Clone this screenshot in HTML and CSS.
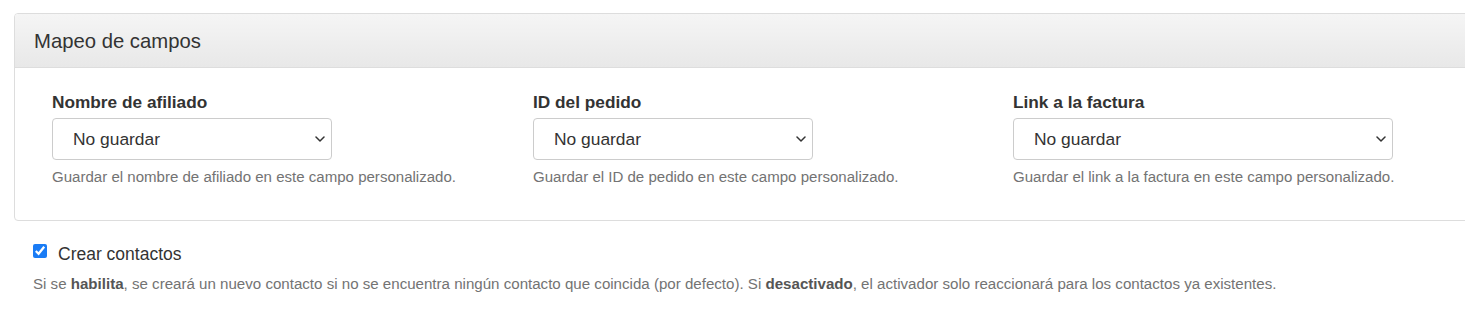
FILE: index.html
```html
<!DOCTYPE html>
<html lang="es">
<head>
<meta charset="utf-8">
<title>Mapeo de campos</title>
<link rel="stylesheet" href="styles.css">
</head>
<body>
<div class="page">
  <section class="panel">
    <div class="panel-heading">Mapeo de campos</div>
    <div class="panel-body">
      <div class="field">
        <label class="field-label">Nombre de afiliado</label>
        <select class="select"><option>No guardar</option></select>
        <p class="help">Guardar el nombre de afiliado en este campo personalizado.</p>
      </div>
      <div class="field">
        <label class="field-label">ID del pedido</label>
        <select class="select"><option>No guardar</option></select>
        <p class="help">Guardar el ID de pedido en este campo personalizado.</p>
      </div>
      <div class="field">
        <label class="field-label">Link a la factura</label>
        <select class="select select-wide"><option>No guardar</option></select>
        <p class="help">Guardar el link a la factura en este campo personalizado.</p>
      </div>
    </div>
  </section>
  <div class="check-row">
    <input type="checkbox" class="check" checked>
    <span class="check-label">Crear contactos</span>
  </div>
  <p class="desc">Si se <b>habilita</b>, se creará un nuevo contacto si no se encuentra ningún contacto que coincida (por defecto). Si <b>desactivado</b>, el activador solo reaccionará para los contactos ya existentes.</p>
</div>
</body>
</html>
```
FILE: styles.css
```css
html, body {
  margin: 0;
  padding: 0;
  background: #ffffff;
  overflow: hidden;
}
body {
  font-family: "Liberation Sans", Arial, Helvetica, sans-serif;
  color: #333333;
}
.page {
  padding-top: 13px;
}
.panel {
  margin-left: 14px;
  margin-right: -20px;
  border: 1px solid #dddddd;
  border-radius: 4px;
  background: #ffffff;
}
.panel-heading {
  height: 54px;
  box-sizing: border-box;
  display: flex;
  align-items: center;
  padding: 2px 19px 0;
  font-size: 20.3px;
  color: #333333;
  background: linear-gradient(to bottom, #f5f5f5 0%, #e8e8e8 100%);
  border-bottom: 1px solid #dddddd;
  border-radius: 3px 3px 0 0;
}
.panel-body {
  display: grid;
  grid-template-columns: 481px 480px 1fr;
  padding: 24px 0 35px 37px;
}
.field {
  display: flex;
  flex-direction: column;
  align-items: flex-start;
}
.field-label {
  font-weight: bold;
  font-size: 17.25px;
  line-height: 20px;
  color: #333333;
  margin-bottom: 6px;
}
.select {
  appearance: none;
  -webkit-appearance: none;
  width: 280px;
  height: 42px;
  box-sizing: border-box;
  border: 1px solid #cccccc;
  border-radius: 4px;
  background-color: #ffffff;
  background-image: url("data:image/svg+xml;utf8,<svg xmlns='http://www.w3.org/2000/svg' width='10' height='6' viewBox='0 0 10 6'><path d='M1 1 L5 5 L9 1' fill='none' stroke='%23333' stroke-width='1.5' stroke-linecap='round' stroke-linejoin='round'/></svg>");
  background-repeat: no-repeat;
  background-position: right 6px center;
  background-size: 10px 6px;
  padding: 0 24px 0 20px;
  font-family: "Liberation Sans", Arial, Helvetica, sans-serif;
  font-size: 17.4px;
  color: #333333;
}
.select-wide {
  width: 380px;
}
.help {
  margin: 8px 0 0;
  font-size: 15.05px;
  line-height: 17px;
  color: #737373;
}
.check-row {
  display: flex;
  align-items: flex-start;
  margin: 23px 0 0 33px;
}
.check {
  width: 14px;
  height: 14px;
  margin: 0 11px 0 0;
  accent-color: #1a7cf5;
}
.check-label {
  font-size: 17.5px;
  line-height: 20px;
  color: #333333;
  margin-top: 0;
}
.desc {
  margin: 11px 0 0 33px;
  font-size: 15.1px;
  line-height: 17px;
  color: #737373;
}
.desc b {
  color: #555555;
}
```
